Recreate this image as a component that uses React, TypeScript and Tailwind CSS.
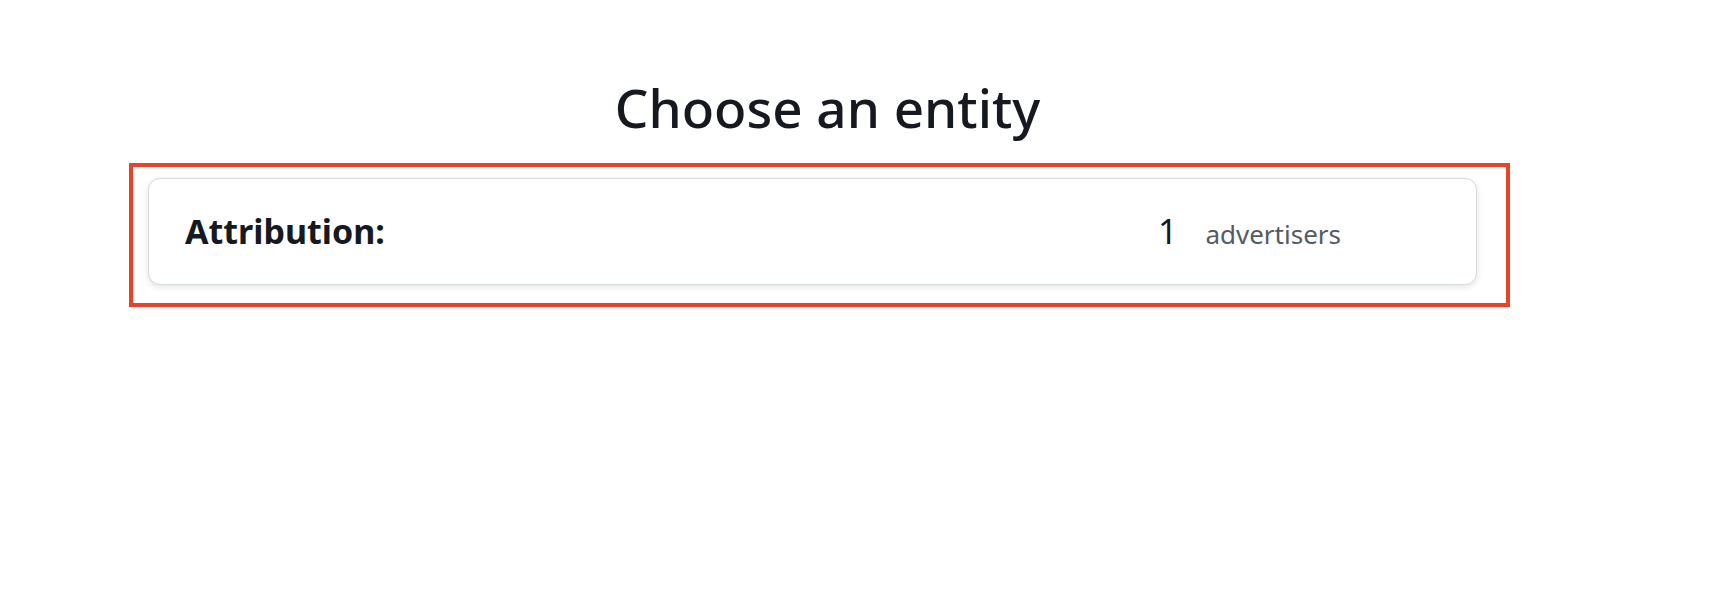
export default function App() {
  return (
    <div className="min-h-[598px] bg-white font-['Noto_Sans',sans-serif] text-[#16191f]">
      <div className="ml-[129px] w-[1381px]">
        {/* Heading */}
        <h1 className="pt-[81px] text-center text-[53px] leading-[53px] font-medium pl-[16px]">
          Choose an entity
        </h1>

        {/* Highlighted entity list */}
        <div className="mt-[29px] h-[144px] border-4 border-[#e6432a] pl-[15px] pr-[29px] pt-[11px]">
          <div className="flex h-[107px] items-center rounded-xl border border-[#d5dbdb] bg-white pl-[36px] pr-[135px] shadow-[0_2px_6px_rgba(0,28,36,0.12)]">
            <div className="flex-1 text-[34px] font-bold">Attribution:</div>
            <div className="flex items-baseline">
              <span className="text-[34px]">1</span>
              <span className="ml-[28px] text-[26px] text-[#545b64]">advertisers</span>
            </div>
          </div>
        </div>
      </div>
    </div>
  );
}
